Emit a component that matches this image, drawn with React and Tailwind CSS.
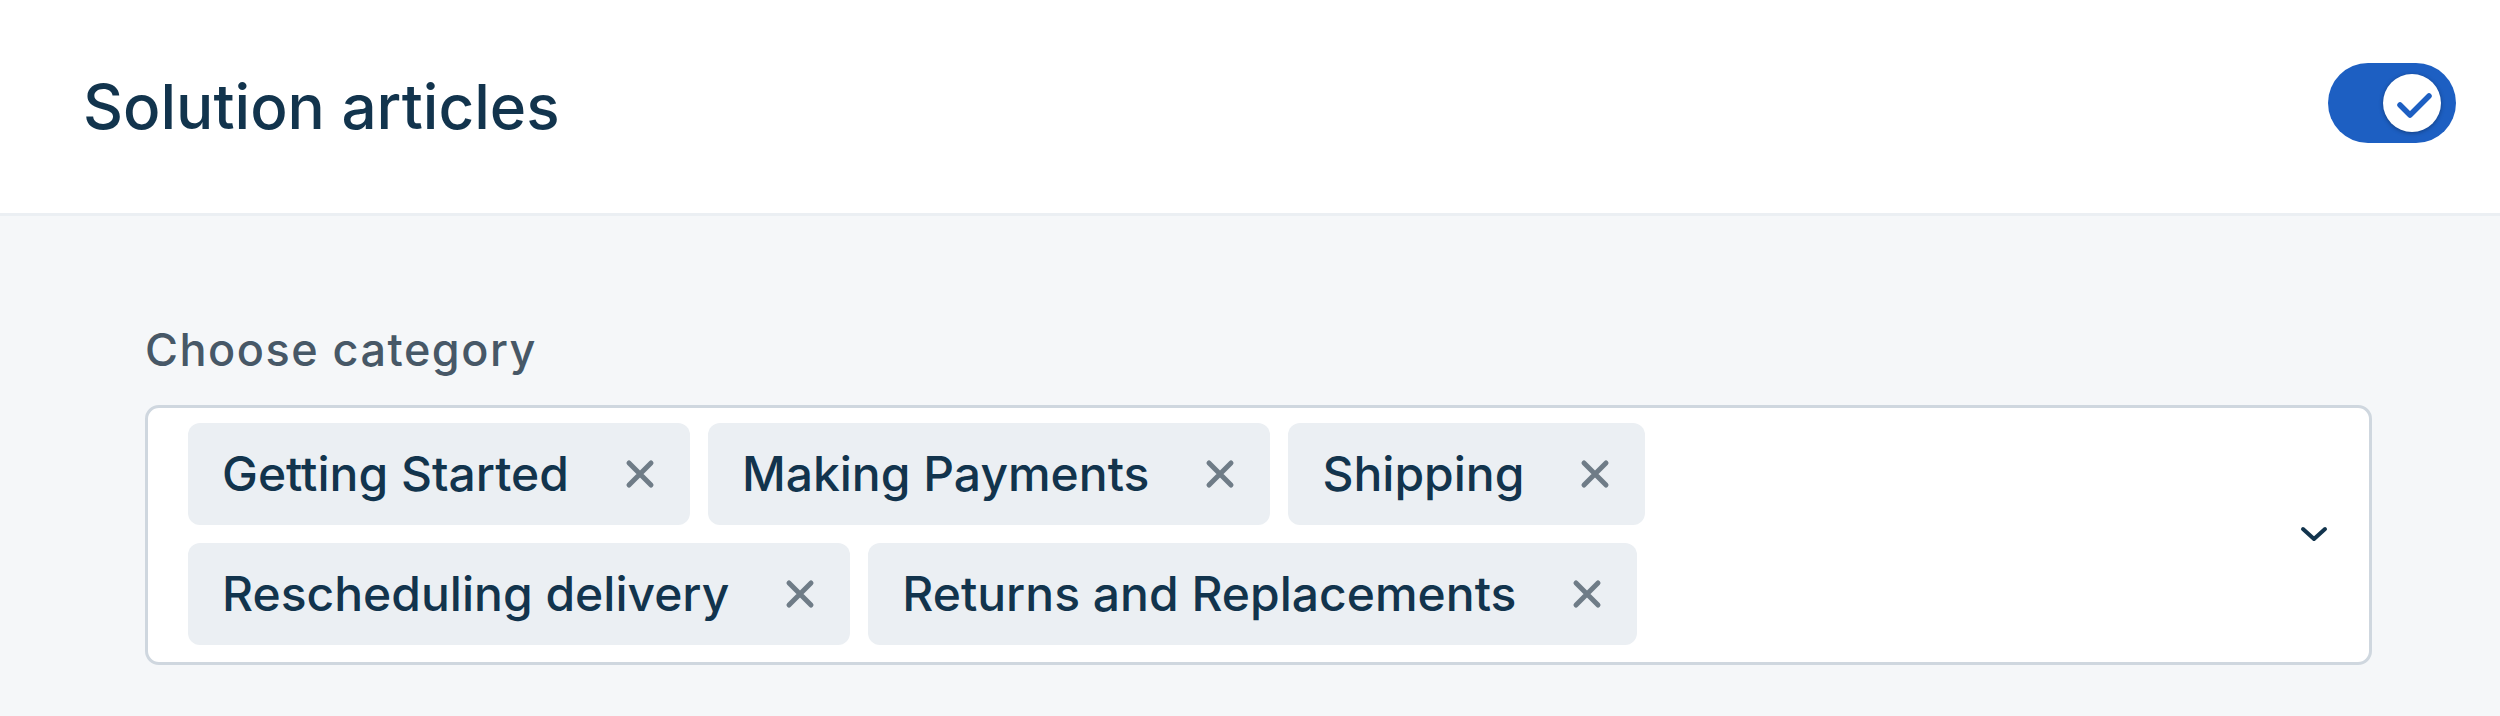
import { useState } from "react";

const categorias = [
  "Getting Started",
  "Making Payments",
  "Shipping",
  "Rescheduling delivery",
  "Returns and Replacements",
];

function Chip({ nome, onRemove }) {
  return (
    <div className="flex items-center h-[102px] rounded-[12px] bg-[#ebeff3] pl-[34px] pr-[35px] gap-[56px]">
      <span className="text-[48px] leading-none font-medium text-[#12344d] whitespace-nowrap">{nome}</span>
      <button onClick={onRemove} className="w-[30px] h-[30px] flex items-center justify-center">
        <svg width="30" height="30" viewBox="0 0 30 30">
          <path d="M4 4 L26 26 M26 4 L4 26" stroke="#6f7c87" strokeWidth="5" strokeLinecap="round" fill="none" />
        </svg>
      </button>
    </div>
  );
}

function Toggle({ ligado, onToggle }) {
  return (
    <button
      onClick={onToggle}
      className={`w-[128px] h-[80px] rounded-full flex items-center pr-[15px] pl-[12px] mb-[8px] ${
        ligado ? "bg-[#1d5fc2] justify-end" : "bg-[#cfd7df] justify-start"
      }`}
    >
      <span className="w-[58px] h-[58px] rounded-full bg-white shadow-[0_1px_4px_rgba(0,0,0,0.35)] flex items-center justify-center">
        {ligado && (
          <svg width="58" height="58" viewBox="0 0 58 58">
            <path d="M17 31 L27 41 L46 22" stroke="#1d5fc2" strokeWidth="5.5" strokeLinecap="round" strokeLinejoin="round" fill="none" />
          </svg>
        )}
      </span>
    </button>
  );
}

export default function App() {
  const [ligado, setLigado] = useState(true);
  const [selecionadas, setSelecionadas] = useState(categorias);

  return (
    <div className="w-[2500px] h-[716px] bg-[#f5f7f9] font-['Inter',sans-serif] overflow-hidden">
      <div className="h-[216px] bg-white border-b-[3px] border-[#ebeff3] flex items-center justify-between pl-[83px] pr-[44px]">
        <h1 className="text-[62px] leading-none font-medium text-[#12344d]">Solution articles</h1>
        <Toggle ligado={ligado} onToggle={() => setLigado(!ligado)} />
      </div>

      <div className="pt-[111px] pl-[145px] pr-[128px]">
        <label className="block text-[45px] leading-none tracking-[1.5px] font-medium text-[#475867]">Choose category</label>
        <div className="mt-[33px] bg-white border-[3px] border-[#cfd7df] rounded-[14px] flex items-center pl-[40px] pr-[41px] pt-[15px] pb-[17px]">
          <div className="flex-1 flex flex-wrap gap-[18px] pr-[100px]">
            {selecionadas.map((nome) => (
              <Chip key={nome} nome={nome} onRemove={() => setSelecionadas(selecionadas.filter((c) => c !== nome))} />
            ))}
          </div>
          <svg width="28" height="16" viewBox="0 0 28 16">
            <path d="M3 3 L14 13 L25 3" stroke="#12344d" strokeWidth="4" strokeLinecap="round" strokeLinejoin="round" fill="none" />
          </svg>
        </div>
      </div>
    </div>
  );
}
